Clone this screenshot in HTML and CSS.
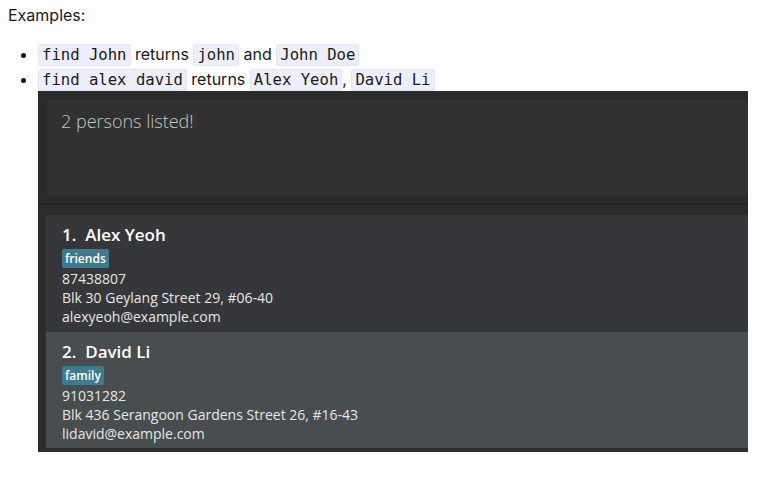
FILE: index.html
```html
<!DOCTYPE html>
<html>
<head>
<meta charset="utf-8">
<link rel="stylesheet" href="styles.css">
</head>
<body>
<p class="intro">Examples:</p>
<ul class="examples">
  <li><code>find John</code> returns <code>john</code> and <code>John Doe</code></li>
  <li><code>find alex david</code> returns <code>Alex Yeoh</code>, <code>David Li</code>
    <div class="shot">
      <div class="result">2 persons listed!</div>
      <div class="divider"></div>
      <div class="list">
        <div class="card">
          <div class="name">1.&nbsp; Alex Yeoh</div>
          <span class="tag">friends</span>
          <div class="line">87438807</div>
          <div class="line">Blk 30 Geylang Street 29, #06-40</div>
          <div class="line">alexyeoh@example.com</div>
        </div>
        <div class="card alt">
          <div class="name">2.&nbsp; David Li</div>
          <span class="tag">family</span>
          <div class="line">91031282</div>
          <div class="line">Blk 436 Serangoon Gardens Street 26, #16-43</div>
          <div class="line">lidavid@example.com</div>
        </div>
      </div>
    </div>
  </li>
</ul>
</body>
</html>
```
FILE: styles.css
```css
html, body {
  margin: 0;
  background: #fdfdfd;
}
body {
  padding: 3px 8px 0 8px;
  font-family: Inter, "Liberation Sans", sans-serif;
  font-size: 16px;
  color: #1a1a1a;
}
.intro {
  margin: 0;
  line-height: 24px;
}
.examples {
  margin: 15px 0 0 0;
  padding-left: 30px;
  line-height: 24px;
}
code {
  font-family: "DejaVu Sans Mono", monospace;
  font-size: 15.6px;
  background: #ededfb;
  border: 1px solid #e4e4f4;
  border-radius: 3px;
  padding: 1px 3px;
}
.shot {
  width: 710px;
  height: 361px;
  margin-top: -1px;
  background: #2b2b2b;
  box-sizing: border-box;
  padding: 8px 0 4px 8px;
  display: flex;
  flex-direction: column;
  overflow: hidden;
  font-family: "Open Sans", "Noto Sans", sans-serif;
}
.result {
  height: 97px;
  flex-shrink: 0;
  box-sizing: border-box;
  background: #313131;
  border: 1px solid #2a2a2a;
  border-right: none;
  padding: 8px 14px;
  color: #c4c8c8;
  font-size: 18px;
  font-weight: 300;
  line-height: 26px;
}
.divider {
  height: 3px;
  flex-shrink: 0;
  margin-top: 7px;
  margin-left: -8px;
  background: #262626;
}
.list {
  flex: 1;
  padding-top: 9px;
  display: flex;
  flex-direction: column;
}
.card {
  background: #36373a;
  color: #f0f0f0;
  padding: 7px 16px 3px 16px;
  height: 117px;
  flex-shrink: 0;
  box-sizing: border-box;
}
.card.alt {
  background: #484d50;
  flex: 1;
}
.name {
  font-size: 17px;
  font-weight: 600;
  line-height: 26px;
  color: #ffffff;
}
.tag {
  display: block;
  width: fit-content;
  background: #3e7b91;
  color: #ffffff;
  font-size: 12px;
  font-weight: 600;
  line-height: 19px;
  padding: 0 3px;
  border-radius: 2px;
  margin: 1px 0 1px 0;
}
.line {
  font-size: 14px;
  line-height: 19px;
  color: #e6e6e6;
}
```
